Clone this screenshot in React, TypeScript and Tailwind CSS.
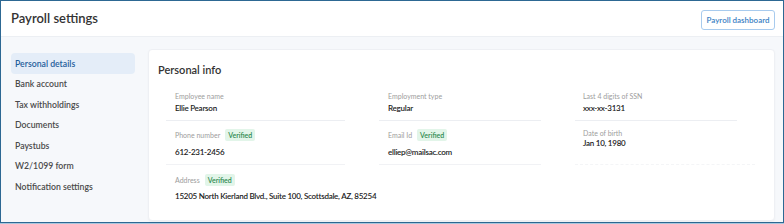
const navItems = [
  'Personal details',
  'Bank account',
  'Tax withholdings',
  'Documents',
  'Paystubs',
  'W2/1099 form',
  'Notification settings',
];

function Verified() {
  return (
    <span className="ml-[5px] inline-flex h-[12px] items-center rounded-[2px] bg-[#e2f5e9] px-[3px] text-[7px] font-semibold text-[#2e8a50]">
      Verified
    </span>
  );
}

const valueCls = 'text-[8px] font-semibold tracking-[-0.25px] text-[#222]';

export default function App() {
  return (
    <div className="h-[224px] w-[784px] bg-[#a9c6dc] font-['Lato','Liberation_Sans',sans-serif]">
      <div className="flex h-[223px] flex-col border border-[#2d6893] bg-[#f6f8fb]">
        {/* header */}
        <header className="flex h-[36px] shrink-0 items-center justify-between border-b border-[#eceff3] bg-white pl-[10px] pr-[8px]">
          <h1 className="mt-[1px] text-[13px] font-semibold text-[#333]">Payroll settings</h1>
          <button className="mt-[2px] h-[20px] w-[74px] rounded-[3px] border border-[#a8cbee] bg-white text-[8px] font-semibold text-[#3b7fc4]">
            Payroll dashboard
          </button>
        </header>

        <div className="flex flex-1 pl-[10px] pr-[8px]">
          {/* sidebar */}
          <nav className="w-[124px] shrink-0 pt-[16px]">
            {navItems.map((item, i) => (
              <div
                key={item}
                className={
                  i === 0
                    ? 'flex h-[20.5px] items-center rounded-[4px] bg-[#e4edf8] px-[4px] text-[8.7px] font-semibold text-[#1f5e9c]'
                    : 'flex h-[20.5px] items-center px-[4px] text-[8.7px] font-semibold text-[#4a4a4a]'
                }
              >
                {item}
              </div>
            ))}
          </nav>

          {/* card */}
          <section className="ml-[13px] mt-[12px] mb-[1px] flex-1 rounded-[4px] border border-[#eef0f4] bg-white px-[9px] pt-[12px] shadow-[0_1px_2px_rgba(0,0,0,0.04)]">
            <h2 className="h-[16px] text-[11px] font-semibold leading-[16px] text-[#333]">Personal info</h2>

            <div className="ml-[8px]">
              <div className="flex gap-[34px]">
                <div className="w-[179px] border-b border-[#eceef2] px-[9px] pb-[7px] pt-[13px]">
                  <div className="text-[7px] leading-[10px] text-[#9d9d9d]">Employee name</div>
                  <div className={`mt-[2px] leading-[10px] ${valueCls}`}>Ellie Pearson</div>
                </div>
                <div className="w-[162px] border-b border-[#eceef2] px-[9px] pb-[7px] pt-[13px]">
                  <div className="text-[7px] leading-[10px] text-[#9d9d9d]">Employment type</div>
                  <div className={`mt-[2px] leading-[10px] ${valueCls}`}>Regular</div>
                </div>
                <div className="w-[162px] border-b border-[#eceef2] px-[8px] pb-[7px] pt-[13px]">
                  <div className="text-[7px] leading-[10px] text-[#9d9d9d]">Last 4 digits of SSN</div>
                  <div className={`mt-[2px] leading-[10px] ${valueCls}`}>xxx-xx-3131</div>
                </div>
              </div>

              <div className="flex gap-[34px]">
                <div className="w-[179px] border-b border-[#f1f2f5] px-[9px] pb-[6px] pt-[8px]">
                  <div className="flex h-[12px] items-center text-[7px] text-[#9d9d9d]">
                    Phone number <Verified />
                  </div>
                  <div className={`mt-[5px] leading-[12px] ${valueCls}`}>612-231-2456</div>
                </div>
                <div className="w-[162px] border-b border-[#f1f2f5] px-[9px] pb-[6px] pt-[8px]">
                  <div className="flex h-[12px] items-center text-[7px] text-[#9d9d9d]">
                    Email Id <Verified />
                  </div>
                  <div className={`mt-[5px] leading-[12px] ${valueCls}`}>elliep@mailsac.com</div>
                </div>
                <div className="w-[180px] border-b border-dashed border-[#f4f5f7] px-[8px] pt-[8px]">
                  <div className="flex h-[8px] items-center text-[7px] text-[#9d9d9d]">Date of birth</div>
                  <div className={`leading-[12px] ${valueCls}`}>Jan 10, 1980</div>
                </div>
              </div>

              <div className="px-[9px] pt-[9px]">
                <div className="flex h-[12px] items-center text-[7px] text-[#9d9d9d]">
                  Address <Verified />
                </div>
                <div className={`mt-[4px] leading-[12px] ${valueCls}`}>
                  15205 North Kierland Blvd., Suite 100, Scottsdale, AZ, 85254
                </div>
              </div>
            </div>
          </section>
        </div>
      </div>
    </div>
  );
}
